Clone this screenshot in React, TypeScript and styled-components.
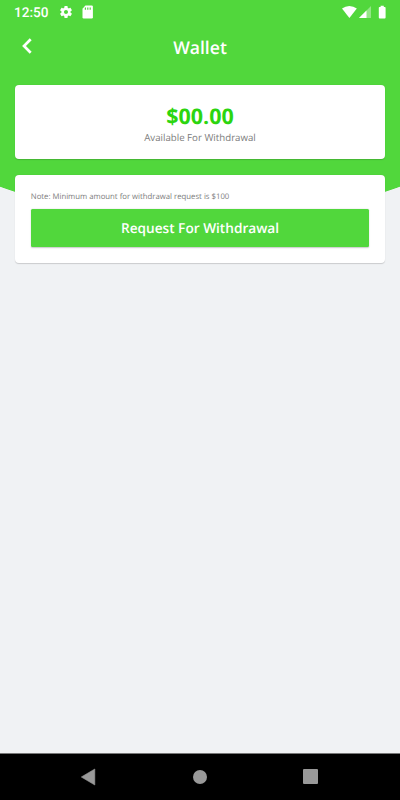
import React from "react";
import styled, { createGlobalStyle } from "styled-components";

const GlobalStyle = createGlobalStyle`
  * { box-sizing: border-box; }
  body { margin: 0; }
`;

const Screen = styled.div`
  width: 400px;
  height: 800px;
  display: flex;
  flex-direction: column;
  overflow: hidden;
  font-family: "Open Sans", sans-serif;
  text-rendering: geometricPrecision;
  background: radial-gradient(circle at 200px -368.5px, #51d73c 589.7px, #f0f2f4 590.5px);
`;

const StatusBar = styled.div`
  height: 24px;
  flex: none;
  display: flex;
  align-items: center;
  padding: 0 13px 0 14px;
  color: #fff;
`;

const Clock = styled.span`
  width: 45px;
  padding-top: 1px;
  font: 500 13.6px/24px Roboto, sans-serif;
  white-space: nowrap;
`;

const StatusIcons = styled.div<{ $end?: boolean }>`
  display: flex;
  align-items: center;
  margin-left: ${(p) => (p.$end ? "auto" : "0")};

  svg { display: block; }
`;

const Header = styled.header`
  height: 46px;
  flex: none;
  display: grid;
  grid-template-columns: 54px 1fr 54px;
  align-items: center;
`;

const BackButton = styled.button`
  width: 54px;
  height: 44px;
  padding: 0 0 2px;
  border: 0;
  background: none;
  display: grid;
  place-items: center;
`;

const Title = styled.h1`
  margin: 0;
  padding-top: 2px;
  text-align: center;
  font-size: 17.6px;
  font-weight: 600;
  line-height: 44px;
  color: #fff;
`;

const Content = styled.main`
  flex: 1;
  display: flex;
  flex-direction: column;
  gap: 16px;
  padding: 15.4px 15.3px 0;
`;

const Card = styled.section<{ $height: number }>`
  height: ${(p) => p.$height}px;
  background: #fff;
  border-radius: 4px;
  box-shadow: 0 0.5px 1px rgba(0, 0, 0, 0.16);
`;

const BalanceCard = styled(Card)`
  display: flex;
  flex-direction: column;
  align-items: center;
  padding-top: 17.6px;
`;

const RequestCard = styled(Card)`
  padding: 15px 15.5px 0;
`;

const Amount = styled.div`
  font-size: 21.5px;
  font-weight: 700;
  line-height: 28px;
  color: #2cd50f;
`;

const Caption = styled.div`
  font-size: 9.7px;
  line-height: 14px;
  color: #7c7c7c;
`;

const Note = styled.p`
  margin: 0;
  font-size: 7.75px;
  line-height: 14px;
  color: #7c7c7c;
`;

const RequestButton = styled.button`
  display: block;
  width: 100%;
  height: 38.5px;
  margin-top: 5px;
  padding: 0;
  border: 0;
  border-radius: 1.5px;
  background: #51d73c;
  box-shadow: 0 0.5px 1.5px rgba(0, 0, 0, 0.22);
  color: #fff;
  font: 600 13.65px/38px "Open Sans", sans-serif;
  text-rendering: inherit;
`;

const NavBar = styled.nav`
  height: 47px;
  flex: none;
  display: grid;
  grid-template-columns: repeat(3, 111px);
  justify-content: center;
  place-items: center;
  background: #000;
  border-top: 1px solid #777;
  padding: 0 1px 1px 0;

  svg { display: block; }
`;

export default function App() {
  return (
    <>
      <GlobalStyle />
      <Screen>
        <StatusBar>
          <Clock>12:50</Clock>
          <StatusIcons>
            <svg width="14" height="14" viewBox="0.8 0.8 22.4 22.4" fill="#fff">
              <path d="M19.14 12.94c.04-.3.06-.61.06-.94 0-.32-.02-.64-.07-.94l2.03-1.58c.18-.14.23-.41.12-.61l-1.92-3.32c-.12-.22-.37-.29-.59-.22l-2.39.96c-.5-.38-1.03-.7-1.62-.94l-.36-2.54c-.04-.24-.24-.41-.48-.41h-3.84c-.24 0-.43.17-.47.41l-.36 2.54c-.59.24-1.13.57-1.62.94l-2.39-.96c-.22-.08-.47 0-.59.22L2.74 8.87c-.12.21-.08.47.12.61l2.03 1.58c-.05.3-.09.63-.09.94s.02.64.07.94l-2.03 1.58c-.18.14-.23.41-.12.61l1.92 3.32c.12.22.37.29.59.22l2.39-.96c.5.38 1.03.7 1.62.94l.36 2.54c.05.24.24.41.48.41h3.84c.24 0 .44-.17.47-.41l.36-2.54c.59-.24 1.13-.56 1.62-.94l2.39.96c.22.08.47 0 .59-.22l1.92-3.32c.12-.22.07-.47-.12-.61l-2.01-1.58zM12 15.2c-1.77 0-3.2-1.43-3.2-3.2s1.43-3.2 3.2-3.2 3.2 1.43 3.2 3.2-1.43 3.2-3.2 3.2z" />
            </svg>
            <svg width="28" height="16" viewBox="0.8 -0.3 28 16">
              <path d="M13.2 1.2h6.3q1.2 0 1.2 1.2v10.6q0 1.2-1.2 1.2h-8q-1.2 0-1.2-1.2V4.4z" fill="#fff" />
              <path d="M13.2 3.2v2.3M15.6 3.2v2.3M18 3.2v2.3" stroke="#51d73c" strokeWidth="1.2" />
            </svg>
          </StatusIcons>
          <StatusIcons $end>
            <svg width="45" height="16" viewBox="0 -0.5 45 16">
              <path d="M0 4Q3.3 1.5 7.4 1.5T14.8 4L7.4 13.4z" fill="#fff" />
              <path d="M29 1.5V13.5H17z" fill="#fff" fillOpacity=".38" />
              <path d="M24.5 6v7.5H17z" fill="#fff" />
              <path d="M38.6 1.3h3.2v1.2h1q.8 0 .8.8v9.7q0 .9-.9.9h-5q-.9 0-.9-.9V3.3q0-.8.8-.8h1z" fill="#fff" />
            </svg>
          </StatusIcons>
        </StatusBar>
        <Header>
          <BackButton aria-label="Back">
            <svg width="12" height="18" viewBox="0 0 12 18" fill="none">
              <path d="M9.7 2.2 3 9l6.7 6.8" stroke="#fff" strokeWidth="2.7" />
            </svg>
          </BackButton>
          <Title>Wallet</Title>
        </Header>
        <Content>
          <BalanceCard $height={73.6}>
            <Amount>$00.00</Amount>
            <Caption>Available For Withdrawal</Caption>
          </BalanceCard>
          <RequestCard $height={88}>
            <Note>Note: Minimum amount for withdrawal request is $100</Note>
            <RequestButton>Request For Withdrawal</RequestButton>
          </RequestCard>
        </Content>
        <NavBar>
          <svg width="16" height="18" viewBox="0.7 0 16 18"><path d="M14.5 1v16L1 9z" fill="#999" stroke="#999" strokeWidth=".6" strokeLinejoin="round" /></svg>
          <svg width="14" height="14" viewBox="0 0 14 14"><circle cx="7" cy="7" r="7" fill="#999" /></svg>
          <svg width="15" height="15" viewBox="0 0 15 15"><rect width="15" height="15" rx="1" fill="#999" /></svg>
        </NavBar>
      </Screen>
    </>
  );
}
